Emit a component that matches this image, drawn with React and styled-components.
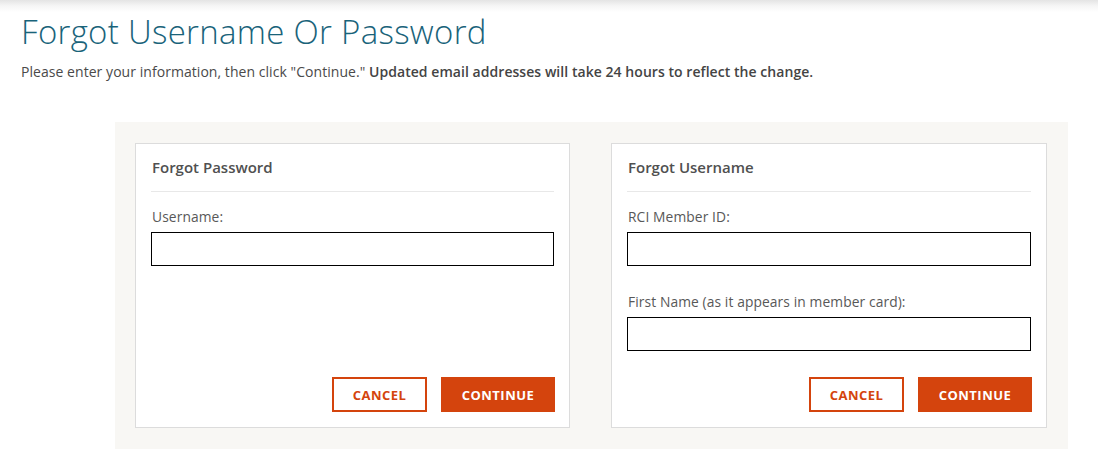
import React from "react";
import styled, { createGlobalStyle } from "styled-components";

const GlobalStyle = createGlobalStyle`
    html, body {
        margin: 0;
        padding: 0;
        background: #fff;
        font-family: "Open Sans", "Liberation Sans", sans-serif;
        color: #444;
    }
    * { box-sizing: border-box; }
`;

const TopShade = styled.div`
    height: 12px;
    background: linear-gradient(to bottom, #e4e4e4 0%, #f6f6f6 50%, #fff 100%);
`;

const Header = styled.header`
    padding: 0 21px;
`;

const Title = styled.h1`
    margin: 0;
    font-size: 33px;
    line-height: 40px;
    font-weight: 300;
    color: #19637a;
    letter-spacing: 0.3px;
`;

const Intro = styled.p`
    margin: 10px 0 0 0;
    font-size: 14px;
    line-height: 20px;
    letter-spacing: 0.05px;
    color: #4a4a4a;

    b { font-weight: 600; color: #444; }
`;

const Panel = styled.section`
    margin: 40px 0 0 115px;
    width: 953px;
    padding: 21px 21px 21px 20px;
    background: #f8f7f4;
    display: grid;
    grid-template-columns: 435px 436px;
    column-gap: 41px;
`;

const Card = styled.div`
    height: 285px;
    background: #fff;
    border: 1px solid #dcdcdc;
    padding: 0 15px 15px 15px;
    display: flex;
    flex-direction: column;
`;

const CardTitle = styled.h2`
    margin: 0;
    padding: 12px 1px 13px 1px;
    font-size: 15px;
    line-height: 22px;
    font-weight: 600;
    color: #505050;
    border-bottom: 1px solid #e8e8e8;
`;

const Label = styled.label`
    display: block;
    margin: ${(p) => (p.$first ? "15px" : "26px")} 0 6px 1px;
    font-size: 13.8px;
    line-height: 19px;
    letter-spacing: 0.1px;
    color: #585858;
`;

const Input = styled.input`
    display: block;
    width: 100%;
    height: 34px;
    border: 1px solid #000;
    border-radius: 0;
    padding: 0 8px;
    font: inherit;
    outline: none;
`;

const Actions = styled.div`
    margin-top: auto;
    display: flex;
    justify-content: flex-end;
    gap: 14px;
    margin-right: -1px;
`;

const Button = styled.button`
    height: 35px;
    width: ${(p) => (p.$primary ? "114px" : "95px")};
    border: 2px solid #d4440d;
    background: ${(p) => (p.$primary ? "#d4440d" : "#fff")};
    color: ${(p) => (p.$primary ? "#fff" : "#d4440d")};
    font-family: "Open Sans", "Liberation Sans", sans-serif;
    font-size: 13px;
    font-weight: 700;
    letter-spacing: 0.5px;
    text-transform: uppercase;
    cursor: pointer;
    padding: 0;
`;

const App = () => (
    <>
        <GlobalStyle />
        <TopShade />
        <Header>
            <Title>Forgot Username Or Password</Title>
            <Intro>
                Please enter your information, then click "Continue." <b>Updated email addresses will take 24 hours to reflect the change.</b>
            </Intro>
        </Header>
        <Panel>
            <Card>
                <CardTitle>Forgot Password</CardTitle>
                <Label $first htmlFor="username">Username:</Label>
                <Input id="username" type="text" />
                <Actions>
                    <Button type="button">Cancel</Button>
                    <Button type="button" $primary>Continue</Button>
                </Actions>
            </Card>
            <Card>
                <CardTitle>Forgot Username</CardTitle>
                <Label $first htmlFor="memberId">RCI Member ID:</Label>
                <Input id="memberId" type="text" />
                <Label htmlFor="firstName">First Name (as it appears in member card):</Label>
                <Input id="firstName" type="text" />
                <Actions>
                    <Button type="button">Cancel</Button>
                    <Button type="button" $primary>Continue</Button>
                </Actions>
            </Card>
        </Panel>
    </>
);

export default App;
